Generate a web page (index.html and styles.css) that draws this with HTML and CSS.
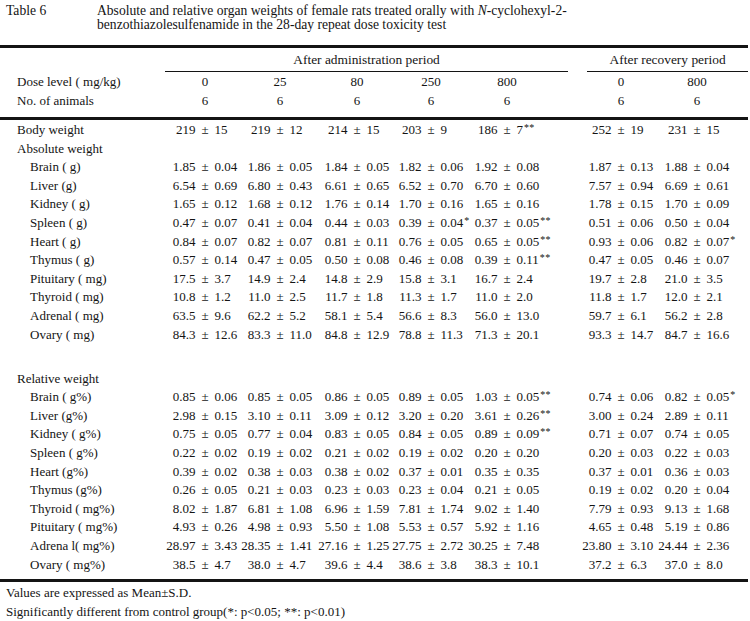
FILE: index.html
```html
<!DOCTYPE html>
<html lang="en">
<head>
<meta charset="utf-8">
<title>Table 6</title>
<link rel="stylesheet" href="styles.css">
</head>
<body>
<div class="caption">
  <div class="cap-num">Table 6</div>
  <div class="cap-text">Absolute and relative organ weights of female rats treated orally with <i>N</i>-cyclohexyl-2-<br>benzothiazolesulfenamide in the 28-day repeat dose toxicity test</div>
</div>
<div class="rule rule-top"></div>
<table class="data head">
  <colgroup>
    <col class="w-label"><col class="w-c1"><col class="w-c2"><col class="w-c3"><col class="w-c4"><col class="w-c5"><col class="w-s1"><col class="w-gap"><col class="w-c6"><col class="w-c7"><col class="w-end">
  </colgroup>
  <thead>
    <tr class="group">
      <td></td>
      <th colspan="6" class="grp">After administration period</th>
      <td></td>
      <th colspan="3" class="grp">After recovery period</th>
    </tr>
    <tr class="hd">
      <td class="lab">Dose level ( mg/kg)</td>
      <td class="n">0</td><td class="n">25</td><td class="n">80</td><td class="n">250</td><td class="n">800</td>
      <td colspan="2"></td>
      <td class="n">0</td><td class="n">800</td><td></td>
    </tr>
    <tr class="hd last">
      <td class="lab">No. of animals</td>
      <td class="n">6</td><td class="n">6</td><td class="n">6</td><td class="n">6</td><td class="n">6</td>
      <td colspan="2"></td>
      <td class="n">6</td><td class="n">6</td><td></td>
    </tr>
  </thead>
</table>
<div class="rule"></div>
<table class="data body">
  <colgroup>
    <col class="w-label"><col class="w-c1"><col class="w-c2"><col class="w-c3"><col class="w-c4"><col class="w-c5"><col class="w-s1"><col class="w-gap"><col class="w-c6"><col class="w-c7"><col class="w-end">
  </colgroup>
  <tbody>
    <tr class="first">
      <td class="lab">Body weight</td>
      <td><div class="v"><span class="l">219</span><span class="pm">±</span><span class="r">15</span></div></td>
      <td><div class="v"><span class="l">219</span><span class="pm">±</span><span class="r">12</span></div></td>
      <td><div class="v"><span class="l">214</span><span class="pm">±</span><span class="r">15</span></div></td>
      <td><div class="v"><span class="l">203</span><span class="pm">±</span><span class="r">9</span></div></td>
      <td><div class="v"><span class="l">186</span><span class="pm">±</span><span class="r">7<sup>**</sup></span></div></td>
      <td colspan="2"></td>
      <td><div class="v"><span class="l">252</span><span class="pm">±</span><span class="r">19</span></div></td>
      <td><div class="v"><span class="l">231</span><span class="pm">±</span><span class="r">15</span></div></td>
      <td></td>
    </tr>
    <tr><td class="lab">Absolute weight</td><td colspan="10"></td></tr>
    <tr>
      <td class="lab sub">Brain ( g)</td>
      <td><div class="v"><span class="l">1.85</span><span class="pm">±</span><span class="r">0.04</span></div></td>
      <td><div class="v"><span class="l">1.86</span><span class="pm">±</span><span class="r">0.05</span></div></td>
      <td><div class="v"><span class="l">1.84</span><span class="pm">±</span><span class="r">0.05</span></div></td>
      <td><div class="v"><span class="l">1.82</span><span class="pm">±</span><span class="r">0.06</span></div></td>
      <td><div class="v"><span class="l">1.92</span><span class="pm">±</span><span class="r">0.08</span></div></td>
      <td colspan="2"></td>
      <td><div class="v"><span class="l">1.87</span><span class="pm">±</span><span class="r">0.13</span></div></td>
      <td><div class="v"><span class="l">1.88</span><span class="pm">±</span><span class="r">0.04</span></div></td>
      <td></td>
    </tr>
    <tr>
      <td class="lab sub">Liver (g)</td>
      <td><div class="v"><span class="l">6.54</span><span class="pm">±</span><span class="r">0.69</span></div></td>
      <td><div class="v"><span class="l">6.80</span><span class="pm">±</span><span class="r">0.43</span></div></td>
      <td><div class="v"><span class="l">6.61</span><span class="pm">±</span><span class="r">0.65</span></div></td>
      <td><div class="v"><span class="l">6.52</span><span class="pm">±</span><span class="r">0.70</span></div></td>
      <td><div class="v"><span class="l">6.70</span><span class="pm">±</span><span class="r">0.60</span></div></td>
      <td colspan="2"></td>
      <td><div class="v"><span class="l">7.57</span><span class="pm">±</span><span class="r">0.94</span></div></td>
      <td><div class="v"><span class="l">6.69</span><span class="pm">±</span><span class="r">0.61</span></div></td>
      <td></td>
    </tr>
    <tr>
      <td class="lab sub">Kidney ( g)</td>
      <td><div class="v"><span class="l">1.65</span><span class="pm">±</span><span class="r">0.12</span></div></td>
      <td><div class="v"><span class="l">1.68</span><span class="pm">±</span><span class="r">0.12</span></div></td>
      <td><div class="v"><span class="l">1.76</span><span class="pm">±</span><span class="r">0.14</span></div></td>
      <td><div class="v"><span class="l">1.70</span><span class="pm">±</span><span class="r">0.16</span></div></td>
      <td><div class="v"><span class="l">1.65</span><span class="pm">±</span><span class="r">0.16</span></div></td>
      <td colspan="2"></td>
      <td><div class="v"><span class="l">1.78</span><span class="pm">±</span><span class="r">0.15</span></div></td>
      <td><div class="v"><span class="l">1.70</span><span class="pm">±</span><span class="r">0.09</span></div></td>
      <td></td>
    </tr>
    <tr>
      <td class="lab sub">Spleen ( g)</td>
      <td><div class="v"><span class="l">0.47</span><span class="pm">±</span><span class="r">0.07</span></div></td>
      <td><div class="v"><span class="l">0.41</span><span class="pm">±</span><span class="r">0.04</span></div></td>
      <td><div class="v"><span class="l">0.44</span><span class="pm">±</span><span class="r">0.03</span></div></td>
      <td><div class="v"><span class="l">0.39</span><span class="pm">±</span><span class="r">0.04<sup>*</sup></span></div></td>
      <td><div class="v"><span class="l">0.37</span><span class="pm">±</span><span class="r">0.05<sup>**</sup></span></div></td>
      <td colspan="2"></td>
      <td><div class="v"><span class="l">0.51</span><span class="pm">±</span><span class="r">0.06</span></div></td>
      <td><div class="v"><span class="l">0.50</span><span class="pm">±</span><span class="r">0.04</span></div></td>
      <td></td>
    </tr>
    <tr>
      <td class="lab sub">Heart ( g)</td>
      <td><div class="v"><span class="l">0.84</span><span class="pm">±</span><span class="r">0.07</span></div></td>
      <td><div class="v"><span class="l">0.82</span><span class="pm">±</span><span class="r">0.07</span></div></td>
      <td><div class="v"><span class="l">0.81</span><span class="pm">±</span><span class="r">0.11</span></div></td>
      <td><div class="v"><span class="l">0.76</span><span class="pm">±</span><span class="r">0.05</span></div></td>
      <td><div class="v"><span class="l">0.65</span><span class="pm">±</span><span class="r">0.05<sup>**</sup></span></div></td>
      <td colspan="2"></td>
      <td><div class="v"><span class="l">0.93</span><span class="pm">±</span><span class="r">0.06</span></div></td>
      <td><div class="v"><span class="l">0.82</span><span class="pm">±</span><span class="r">0.07<sup>*</sup></span></div></td>
      <td></td>
    </tr>
    <tr>
      <td class="lab sub">Thymus ( g)</td>
      <td><div class="v"><span class="l">0.57</span><span class="pm">±</span><span class="r">0.14</span></div></td>
      <td><div class="v"><span class="l">0.47</span><span class="pm">±</span><span class="r">0.05</span></div></td>
      <td><div class="v"><span class="l">0.50</span><span class="pm">±</span><span class="r">0.08</span></div></td>
      <td><div class="v"><span class="l">0.46</span><span class="pm">±</span><span class="r">0.08</span></div></td>
      <td><div class="v"><span class="l">0.39</span><span class="pm">±</span><span class="r">0.11<sup>**</sup></span></div></td>
      <td colspan="2"></td>
      <td><div class="v"><span class="l">0.47</span><span class="pm">±</span><span class="r">0.05</span></div></td>
      <td><div class="v"><span class="l">0.46</span><span class="pm">±</span><span class="r">0.07</span></div></td>
      <td></td>
    </tr>
    <tr>
      <td class="lab sub">Pituitary ( mg)</td>
      <td><div class="v"><span class="l">17.5</span><span class="pm">±</span><span class="r">3.7</span></div></td>
      <td><div class="v"><span class="l">14.9</span><span class="pm">±</span><span class="r">2.4</span></div></td>
      <td><div class="v"><span class="l">14.8</span><span class="pm">±</span><span class="r">2.9</span></div></td>
      <td><div class="v"><span class="l">15.8</span><span class="pm">±</span><span class="r">3.1</span></div></td>
      <td><div class="v"><span class="l">16.7</span><span class="pm">±</span><span class="r">2.4</span></div></td>
      <td colspan="2"></td>
      <td><div class="v"><span class="l">19.7</span><span class="pm">±</span><span class="r">2.8</span></div></td>
      <td><div class="v"><span class="l">21.0</span><span class="pm">±</span><span class="r">3.5</span></div></td>
      <td></td>
    </tr>
    <tr>
      <td class="lab sub">Thyroid ( mg)</td>
      <td><div class="v"><span class="l">10.8</span><span class="pm">±</span><span class="r">1.2</span></div></td>
      <td><div class="v"><span class="l">11.0</span><span class="pm">±</span><span class="r">2.5</span></div></td>
      <td><div class="v"><span class="l">11.7</span><span class="pm">±</span><span class="r">1.8</span></div></td>
      <td><div class="v"><span class="l">11.3</span><span class="pm">±</span><span class="r">1.7</span></div></td>
      <td><div class="v"><span class="l">11.0</span><span class="pm">±</span><span class="r">2.0</span></div></td>
      <td colspan="2"></td>
      <td><div class="v"><span class="l">11.8</span><span class="pm">±</span><span class="r">1.7</span></div></td>
      <td><div class="v"><span class="l">12.0</span><span class="pm">±</span><span class="r">2.1</span></div></td>
      <td></td>
    </tr>
    <tr>
      <td class="lab sub">Adrenal ( mg)</td>
      <td><div class="v"><span class="l">63.5</span><span class="pm">±</span><span class="r">9.6</span></div></td>
      <td><div class="v"><span class="l">62.2</span><span class="pm">±</span><span class="r">5.2</span></div></td>
      <td><div class="v"><span class="l">58.1</span><span class="pm">±</span><span class="r">5.4</span></div></td>
      <td><div class="v"><span class="l">56.6</span><span class="pm">±</span><span class="r">8.3</span></div></td>
      <td><div class="v"><span class="l">56.0</span><span class="pm">±</span><span class="r">13.0</span></div></td>
      <td colspan="2"></td>
      <td><div class="v"><span class="l">59.7</span><span class="pm">±</span><span class="r">6.1</span></div></td>
      <td><div class="v"><span class="l">56.2</span><span class="pm">±</span><span class="r">2.8</span></div></td>
      <td></td>
    </tr>
    <tr>
      <td class="lab sub">Ovary ( mg)</td>
      <td><div class="v"><span class="l">84.3</span><span class="pm">±</span><span class="r">12.6</span></div></td>
      <td><div class="v"><span class="l">83.3</span><span class="pm">±</span><span class="r">11.0</span></div></td>
      <td><div class="v"><span class="l">84.8</span><span class="pm">±</span><span class="r">12.9</span></div></td>
      <td><div class="v"><span class="l">78.8</span><span class="pm">±</span><span class="r">11.3</span></div></td>
      <td><div class="v"><span class="l">71.3</span><span class="pm">±</span><span class="r">20.1</span></div></td>
      <td colspan="2"></td>
      <td><div class="v"><span class="l">93.3</span><span class="pm">±</span><span class="r">14.7</span></div></td>
      <td><div class="v"><span class="l">84.7</span><span class="pm">±</span><span class="r">16.6</span></div></td>
      <td></td>
    </tr>
    <tr class="spacer"><td colspan="11"></td></tr>
    <tr><td class="lab">Relative weight</td><td colspan="10"></td></tr>
    <tr>
      <td class="lab sub">Brain ( g%)</td>
      <td><div class="v"><span class="l">0.85</span><span class="pm">±</span><span class="r">0.06</span></div></td>
      <td><div class="v"><span class="l">0.85</span><span class="pm">±</span><span class="r">0.05</span></div></td>
      <td><div class="v"><span class="l">0.86</span><span class="pm">±</span><span class="r">0.05</span></div></td>
      <td><div class="v"><span class="l">0.89</span><span class="pm">±</span><span class="r">0.05</span></div></td>
      <td><div class="v"><span class="l">1.03</span><span class="pm">±</span><span class="r">0.05<sup>**</sup></span></div></td>
      <td colspan="2"></td>
      <td><div class="v"><span class="l">0.74</span><span class="pm">±</span><span class="r">0.06</span></div></td>
      <td><div class="v"><span class="l">0.82</span><span class="pm">±</span><span class="r">0.05<sup>*</sup></span></div></td>
      <td></td>
    </tr>
    <tr>
      <td class="lab sub">Liver (g%)</td>
      <td><div class="v"><span class="l">2.98</span><span class="pm">±</span><span class="r">0.15</span></div></td>
      <td><div class="v"><span class="l">3.10</span><span class="pm">±</span><span class="r">0.11</span></div></td>
      <td><div class="v"><span class="l">3.09</span><span class="pm">±</span><span class="r">0.12</span></div></td>
      <td><div class="v"><span class="l">3.20</span><span class="pm">±</span><span class="r">0.20</span></div></td>
      <td><div class="v"><span class="l">3.61</span><span class="pm">±</span><span class="r">0.26<sup>**</sup></span></div></td>
      <td colspan="2"></td>
      <td><div class="v"><span class="l">3.00</span><span class="pm">±</span><span class="r">0.24</span></div></td>
      <td><div class="v"><span class="l">2.89</span><span class="pm">±</span><span class="r">0.11</span></div></td>
      <td></td>
    </tr>
    <tr>
      <td class="lab sub">Kidney ( g%)</td>
      <td><div class="v"><span class="l">0.75</span><span class="pm">±</span><span class="r">0.05</span></div></td>
      <td><div class="v"><span class="l">0.77</span><span class="pm">±</span><span class="r">0.04</span></div></td>
      <td><div class="v"><span class="l">0.83</span><span class="pm">±</span><span class="r">0.05</span></div></td>
      <td><div class="v"><span class="l">0.84</span><span class="pm">±</span><span class="r">0.05</span></div></td>
      <td><div class="v"><span class="l">0.89</span><span class="pm">±</span><span class="r">0.09<sup>**</sup></span></div></td>
      <td colspan="2"></td>
      <td><div class="v"><span class="l">0.71</span><span class="pm">±</span><span class="r">0.07</span></div></td>
      <td><div class="v"><span class="l">0.74</span><span class="pm">±</span><span class="r">0.05</span></div></td>
      <td></td>
    </tr>
    <tr>
      <td class="lab sub">Spleen ( g%)</td>
      <td><div class="v"><span class="l">0.22</span><span class="pm">±</span><span class="r">0.02</span></div></td>
      <td><div class="v"><span class="l">0.19</span><span class="pm">±</span><span class="r">0.02</span></div></td>
      <td><div class="v"><span class="l">0.21</span><span class="pm">±</span><span class="r">0.02</span></div></td>
      <td><div class="v"><span class="l">0.19</span><span class="pm">±</span><span class="r">0.02</span></div></td>
      <td><div class="v"><span class="l">0.20</span><span class="pm">±</span><span class="r">0.20</span></div></td>
      <td colspan="2"></td>
      <td><div class="v"><span class="l">0.20</span><span class="pm">±</span><span class="r">0.03</span></div></td>
      <td><div class="v"><span class="l">0.22</span><span class="pm">±</span><span class="r">0.03</span></div></td>
      <td></td>
    </tr>
    <tr>
      <td class="lab sub">Heart (g%)</td>
      <td><div class="v"><span class="l">0.39</span><span class="pm">±</span><span class="r">0.02</span></div></td>
      <td><div class="v"><span class="l">0.38</span><span class="pm">±</span><span class="r">0.03</span></div></td>
      <td><div class="v"><span class="l">0.38</span><span class="pm">±</span><span class="r">0.02</span></div></td>
      <td><div class="v"><span class="l">0.37</span><span class="pm">±</span><span class="r">0.01</span></div></td>
      <td><div class="v"><span class="l">0.35</span><span class="pm">±</span><span class="r">0.35</span></div></td>
      <td colspan="2"></td>
      <td><div class="v"><span class="l">0.37</span><span class="pm">±</span><span class="r">0.01</span></div></td>
      <td><div class="v"><span class="l">0.36</span><span class="pm">±</span><span class="r">0.03</span></div></td>
      <td></td>
    </tr>
    <tr>
      <td class="lab sub">Thymus (g%)</td>
      <td><div class="v"><span class="l">0.26</span><span class="pm">±</span><span class="r">0.05</span></div></td>
      <td><div class="v"><span class="l">0.21</span><span class="pm">±</span><span class="r">0.03</span></div></td>
      <td><div class="v"><span class="l">0.23</span><span class="pm">±</span><span class="r">0.03</span></div></td>
      <td><div class="v"><span class="l">0.23</span><span class="pm">±</span><span class="r">0.04</span></div></td>
      <td><div class="v"><span class="l">0.21</span><span class="pm">±</span><span class="r">0.05</span></div></td>
      <td colspan="2"></td>
      <td><div class="v"><span class="l">0.19</span><span class="pm">±</span><span class="r">0.02</span></div></td>
      <td><div class="v"><span class="l">0.20</span><span class="pm">±</span><span class="r">0.04</span></div></td>
      <td></td>
    </tr>
    <tr>
      <td class="lab sub">Thyroid ( mg%)</td>
      <td><div class="v"><span class="l">8.02</span><span class="pm">±</span><span class="r">1.87</span></div></td>
      <td><div class="v"><span class="l">6.81</span><span class="pm">±</span><span class="r">1.08</span></div></td>
      <td><div class="v"><span class="l">6.96</span><span class="pm">±</span><span class="r">1.59</span></div></td>
      <td><div class="v"><span class="l">7.81</span><span class="pm">±</span><span class="r">1.74</span></div></td>
      <td><div class="v"><span class="l">9.02</span><span class="pm">±</span><span class="r">1.40</span></div></td>
      <td colspan="2"></td>
      <td><div class="v"><span class="l">7.79</span><span class="pm">±</span><span class="r">0.93</span></div></td>
      <td><div class="v"><span class="l">9.13</span><span class="pm">±</span><span class="r">1.68</span></div></td>
      <td></td>
    </tr>
    <tr>
      <td class="lab sub">Pituitary ( mg%)</td>
      <td><div class="v"><span class="l">4.93</span><span class="pm">±</span><span class="r">0.26</span></div></td>
      <td><div class="v"><span class="l">4.98</span><span class="pm">±</span><span class="r">0.93</span></div></td>
      <td><div class="v"><span class="l">5.50</span><span class="pm">±</span><span class="r">1.08</span></div></td>
      <td><div class="v"><span class="l">5.53</span><span class="pm">±</span><span class="r">0.57</span></div></td>
      <td><div class="v"><span class="l">5.92</span><span class="pm">±</span><span class="r">1.16</span></div></td>
      <td colspan="2"></td>
      <td><div class="v"><span class="l">4.65</span><span class="pm">±</span><span class="r">0.48</span></div></td>
      <td><div class="v"><span class="l">5.19</span><span class="pm">±</span><span class="r">0.86</span></div></td>
      <td></td>
    </tr>
    <tr>
      <td class="lab sub">Adrena l( mg%)</td>
      <td><div class="v"><span class="l">28.97</span><span class="pm">±</span><span class="r">3.43</span></div></td>
      <td><div class="v"><span class="l">28.35</span><span class="pm">±</span><span class="r">1.41</span></div></td>
      <td><div class="v"><span class="l">27.16</span><span class="pm">±</span><span class="r">1.25</span></div></td>
      <td><div class="v"><span class="l">27.75</span><span class="pm">±</span><span class="r">2.72</span></div></td>
      <td><div class="v"><span class="l">30.25</span><span class="pm">±</span><span class="r">7.48</span></div></td>
      <td colspan="2"></td>
      <td><div class="v"><span class="l">23.80</span><span class="pm">±</span><span class="r">3.10</span></div></td>
      <td><div class="v"><span class="l">24.44</span><span class="pm">±</span><span class="r">2.36</span></div></td>
      <td></td>
    </tr>
    <tr class="final">
      <td class="lab sub">Ovary ( mg%)</td>
      <td><div class="v"><span class="l">38.5</span><span class="pm">±</span><span class="r">4.7</span></div></td>
      <td><div class="v"><span class="l">38.0</span><span class="pm">±</span><span class="r">4.7</span></div></td>
      <td><div class="v"><span class="l">39.6</span><span class="pm">±</span><span class="r">4.4</span></div></td>
      <td><div class="v"><span class="l">38.6</span><span class="pm">±</span><span class="r">3.8</span></div></td>
      <td><div class="v"><span class="l">38.3</span><span class="pm">±</span><span class="r">10.1</span></div></td>
      <td colspan="2"></td>
      <td><div class="v"><span class="l">37.2</span><span class="pm">±</span><span class="r">6.3</span></div></td>
      <td><div class="v"><span class="l">37.0</span><span class="pm">±</span><span class="r">8.0</span></div></td>
      <td></td>
    </tr>
  </tbody>
</table>
<div class="rule"></div>
<div class="notes">
  <p>Values are expressed as Mean±S.D.</p>
  <p>Significantly different from control group(*: p&lt;0.05; **: p&lt;0.01)</p>
</div>
</body>
</html>
```

FILE: styles.css
```css
html, body {
  margin: 0;
  padding: 0;
  background: #ffffff;
}

body {
  width: 750px;
  font-family: "Liberation Serif", "Times New Roman", serif;
  font-size: 13px;
  color: #141414;
}

.caption {
  display: flex;
  padding: 4px 0 0 6px;
  font-size: 13.6px;
  line-height: 14px;
}

.cap-num {
  width: 91px;
  flex: none;
}

.rule {
  width: 748px;
  height: 3px;
  background: #141414;
}

.rule-top {
  margin-top: 13px;
}

.data {
  width: 748px;
  table-layout: fixed;
  border-collapse: separate;
  border-spacing: 0;
}

.w-label { width: 165px; }
.w-c1 { width: 80px; }
.w-c2 { width: 70px; }
.w-c3 { width: 84px; }
.w-c4 { width: 64px; }
.w-c5 { width: 88px; }
.w-s1 { width: 17px; }
.w-gap { width: 19px; }
.w-c6 { width: 68px; }
.w-c7 { width: 84px; }
.w-end { width: 9px; }

.data td, .data th {
  padding: 0;
  font-weight: normal;
  white-space: nowrap;
  vertical-align: middle;
}

.group th, .group td {
  height: 23px;
  line-height: 23px;
}

.grp {
  text-align: center;
  font-size: 13.4px;
  border-bottom: 1px solid #141414;
}

.hd td {
  height: 19px;
  line-height: 19px;
}

.hd.last td {
  height: 26px;
  vertical-align: top;
}

.hd .n {
  text-align: center;
}

.body td {
  height: 18.6px;
  line-height: 18.6px;
}

.body tr.first td {
  padding-top: 1px;
}

.body tr.final td {
  padding-bottom: 5px;
}

.body tr.spacer td {
  height: 25.5px;
}

.lab {
  padding-left: 17px !important;
}

.lab.sub {
  padding-left: 30px !important;
}

.v {
  display: grid;
  grid-template-columns: minmax(0, 1fr) auto minmax(0, 1fr);
  column-gap: 6px;
}

.v .l {
  display: flex;
  justify-content: flex-end;
}

.v .r {
  text-align: left;
}

.v sup {
  font-size: 10px;
  line-height: 0;
  vertical-align: 3px;
  letter-spacing: 0.3px;
  margin-left: 1px;
}

.notes {
  padding: 1px 0 0 6px;
}

.notes p {
  margin: 0;
  line-height: 19px;
}
```
